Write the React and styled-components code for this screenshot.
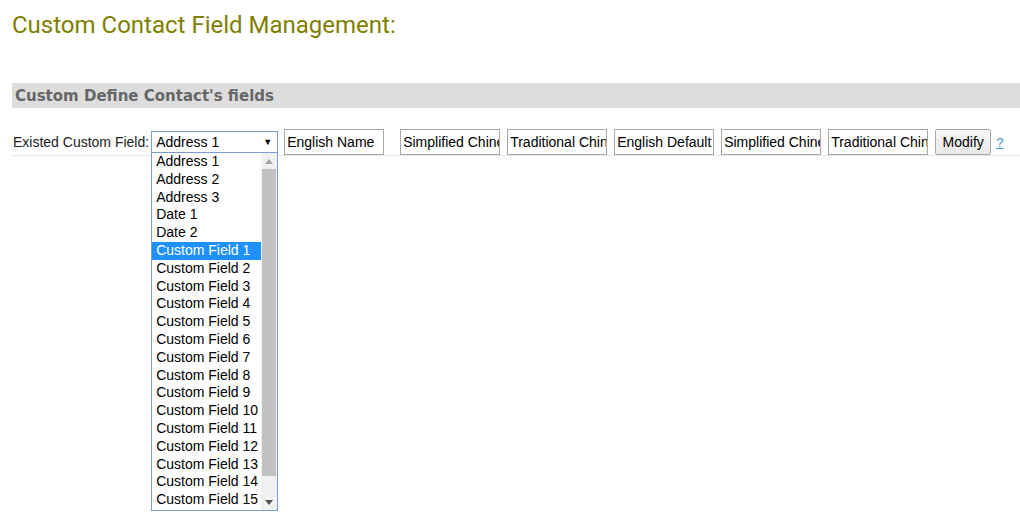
import React from "react";
import styled, { createGlobalStyle } from "styled-components";

const GlobalStyle = createGlobalStyle`
    html, body {
        margin: 0;
        background: #fff;
        font-family: "Liberation Sans", Arial, sans-serif;
    }
`;

const Page = styled.div`
    box-sizing: border-box;
    min-height: 532px;
    padding: 10px 0 0 12px;
`;

const Title = styled.h1`
    margin: 0;
    font-family: Roboto, "Liberation Sans", sans-serif;
    font-weight: 400;
    font-size: 24px;
    line-height: 30px;
    color: #7f7f00;
`;

const SectionBar = styled.div`
    margin-top: 43px;
    height: 25px;
    background: #dddddd;
    display: flex;
    align-items: center;
    padding-left: 3px;
    font-family: "DejaVu Sans", Verdana, sans-serif;
    font-weight: bold;
    font-size: 15px;
    color: #666666;
`;

const FieldRow = styled.div`
    margin-top: 21px;
    display: flex;
    align-items: center;
    height: 26px;
    border-bottom: 1px solid #e6e6e6;
    font-size: 14px;
    color: #222;
`;

const Label = styled.span`
    margin-left: 1px;
    margin-right: 2px;
`;

const SelectWrap = styled.div`
    position: relative;
    width: 127px;
    height: 22px;
`;

const SelectBox = styled.div`
    box-sizing: border-box;
    height: 22px;
    border: 1px solid #7a9cd3;
    display: flex;
    align-items: center;
    justify-content: space-between;
    padding: 0 5px 0 4px;
    background: #fff;
    color: #000;
`;

const Caret = styled.span`
    font-size: 9px;
`;

const DropList = styled.div`
    position: absolute;
    top: 21px;
    left: 0;
    width: 127px;
    height: 359px;
    box-sizing: border-box;
    border: 1px solid #7a9cd3;
    background: #fff;
    display: flex;
    z-index: 5;
`;

const Options = styled.div`
    flex: 1;
    overflow: hidden;
`;

const Option = styled.div`
    height: 17.8px;
    line-height: 17.8px;
    padding-left: 4px;
    white-space: nowrap;
    color: ${(p) => (p.$active ? "#fff" : "#000")};
    background: ${(p) => (p.$active ? "#1e90ff" : "transparent")};
`;

const ScrollTrack = styled.div`
    width: 16px;
    background: #f1f1f1;
    display: flex;
    flex-direction: column;
    align-items: center;
`;

const Arrow = styled.div`
    height: 16px;
    width: 16px;
    display: flex;
    align-items: center;
    justify-content: center;
`;

const Thumb = styled.div`
    width: 14px;
    height: 307px;
    background: #c1c1c1;
`;

const Spacer = styled.div`
    flex: 1;
`;

const TextBox = styled.div`
    box-sizing: border-box;
    width: 100px;
    height: 26px;
    border: 1px solid #a9a9a9;
    margin-left: ${(p) => p.$gap}px;
    padding: 0 2px;
    display: flex;
    align-items: center;
    white-space: nowrap;
    overflow: hidden;
    color: #000;
    background: #fff;
`;

const Button = styled.button`
    box-sizing: border-box;
    margin-left: 7px;
    height: 26px;
    width: 56px;
    border: 1px solid #a9a9a9;
    border-radius: 2px;
    background: linear-gradient(#f6f6f6, #e8e8e8);
    font-family: "Liberation Sans", Arial, sans-serif;
    font-size: 14px;
    color: #000;
    padding: 0;
`;

const Help = styled.a`
    margin-left: 5px;
    color: #3b8ed8;
    text-decoration: underline;
    font-size: 13px;
`;

const options = [
    "Address 1",
    "Address 2",
    "Address 3",
    "Date 1",
    "Date 2",
    ...Array.from({ length: 15 }, (_, i) => `Custom Field ${i + 1}`),
];

const boxes = [
    ["English Name", 6],
    ["Simplified Chinese Name", 16],
    ["Traditional Chinese Name", 7],
    ["English Default", 7],
    ["Simplified Chinese Default", 7],
    ["Traditional Chinese Default", 7],
];

const App = () => {
    return (
        <Page>
            <GlobalStyle />
            <Title>Custom Contact Field Management:</Title>
            <SectionBar>Custom Define Contact's fields</SectionBar>
            <FieldRow>
                <Label>Existed Custom Field:</Label>
                <SelectWrap>
                    <SelectBox>
                        <span>Address 1</span>
                        <Caret>▼</Caret>
                    </SelectBox>
                    <DropList>
                        <Options>
                            {options.map((o) => (
                                <Option key={o} $active={o === "Custom Field 1"}>
                                    {o}
                                </Option>
                            ))}
                        </Options>
                        <ScrollTrack>
                            <Arrow>
                                <svg width="8" height="5" viewBox="0 0 8 5">
                                    <path d="M0 5 L4 0 L8 5 Z" fill="#a3a3a3" />
                                </svg>
                            </Arrow>
                            <Thumb />
                            <Spacer />
                            <Arrow>
                                <svg width="8" height="5" viewBox="0 0 8 5">
                                    <path d="M0 0 L8 0 L4 5 Z" fill="#505050" />
                                </svg>
                            </Arrow>
                        </ScrollTrack>
                    </DropList>
                </SelectWrap>
                {boxes.map(([text, gap]) => (
                    <TextBox key={text} $gap={gap}>
                        {text}
                    </TextBox>
                ))}
                <Button>Modify</Button>
                <Help href="#">?</Help>
            </FieldRow>
        </Page>
    );
};

export default App;
